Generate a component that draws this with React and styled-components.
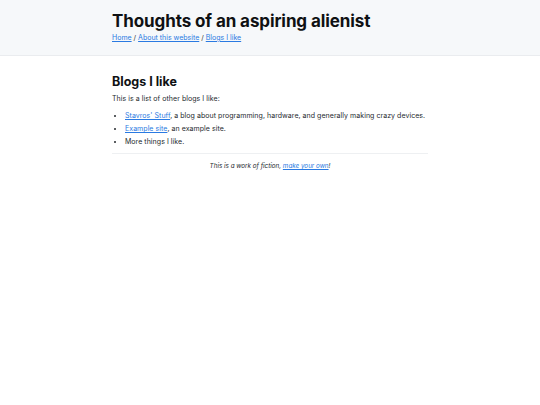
import React from "react";
import styled, { createGlobalStyle } from "styled-components";

const Global = createGlobalStyle`
  html, body { margin: 0; padding: 0; background: #fff; }
  body { font-family: Inter, "Noto Sans", sans-serif; color: #24292e; font-size: 7px; }
`;

const Header = styled.header`
  background: #f6f8fa;
  border-bottom: 1px solid #eaecef;
  height: 56px;
  box-sizing: border-box;
  padding-top: 11px;
`;

const Wrap = styled.div`
  width: 316px;
  margin: 0 auto;
`;

const Title = styled.h1`
  margin: 0;
  font-size: 17px;
  font-weight: 700;
  line-height: 20px;
  color: #0f1113;
  letter-spacing: -0.1px;
`;

const Nav = styled.nav`
  margin-top: 1px;
  font-size: 7px;
  line-height: 12px;
  color: #333;
`;

const A = styled.a`
  color: #2a7ae2;
  text-decoration: underline;
`;

const Main = styled.main`
  padding-top: 18px;
`;

const H2 = styled.h2`
  margin: 0;
  font-size: 12.5px;
  font-weight: 700;
  line-height: 16px;
  color: #0f1113;
`;

const P = styled.p`
  margin: 3px 0 0;
  line-height: 12px;
  letter-spacing: 0.05px;
`;

const List = styled.ul`
  margin: 4px 0 0;
  padding-left: 13px;
  letter-spacing: 0.05px;
`;

const Item = styled.li`
  line-height: 13px;
`;

const Rule = styled.hr`
  border: 0;
  border-top: 1px solid #eef0f2;
  margin: 5px 0 6px;
`;

const Footer = styled.footer`
  text-align: center;
  font-style: italic;
  font-size: 6.3px;
  line-height: 12px;
`;

export default function App() {
  return (
    <>
      <Global />
      <Header>
        <Wrap>
          <Title>Thoughts of an aspiring alienist</Title>
          <Nav>
            <A href="#">Home</A> / <A href="#">About this website</A> / <A href="#">Blogs I like</A>
          </Nav>
        </Wrap>
      </Header>
      <Main>
        <Wrap>
          <H2>Blogs I like</H2>
          <P>This is a list of other blogs I like:</P>
          <List>
            <Item><A href="#">Stavros' Stuff</A>, a blog about programming, hardware, and generally making crazy devices.</Item>
            <Item><A href="#">Example site</A>, an example site.</Item>
            <Item>More things I like.</Item>
          </List>
          <Rule />
          <Footer>This is a work of fiction, <A href="#">make your own</A>!</Footer>
        </Wrap>
      </Main>
    </>
  );
}
